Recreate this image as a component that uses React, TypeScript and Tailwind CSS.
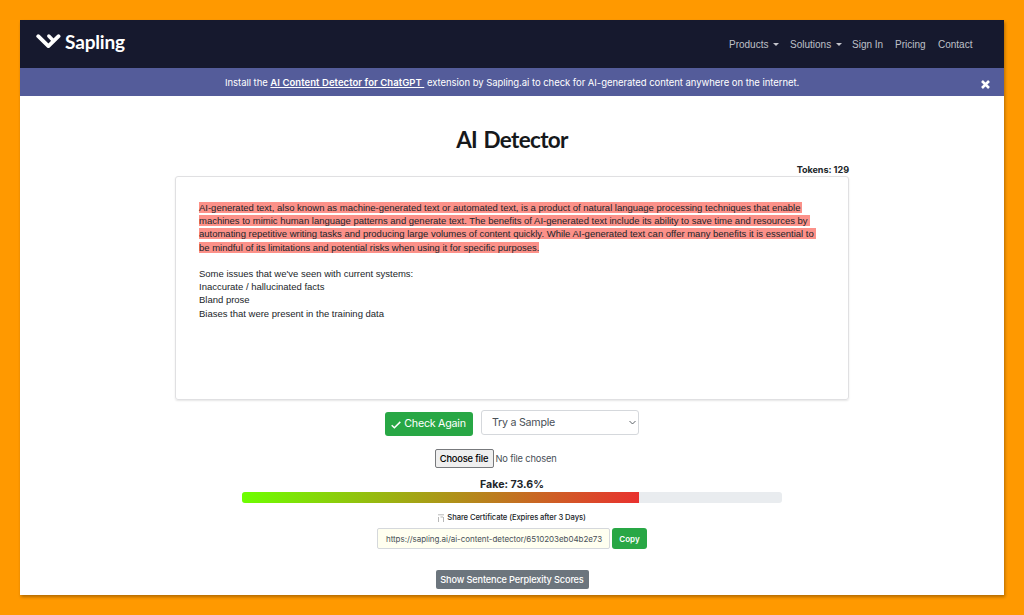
import React from "react";

const highlighted = [
  "AI-generated text, also known as machine-generated text or automated text, is a product of natural language processing techniques that enable",
  "machines to mimic human language patterns and generate text. The benefits of AI-generated text include its ability to save time and resources by",
  "automating repetitive writing tasks and producing large volumes of content quickly. While AI-generated text can offer many benefits it is essential to",
  "be mindful of its limitations and potential risks when using it for specific purposes.",
];

const plain = [
  "Some issues that we've seen with current systems:",
  "Inaccurate / hallucinated facts",
  "Bland prose",
  "Biases that were present in the training data",
];

function Caret() {
  return <span className="ml-[5px] inline-block border-x-[3px] border-t-[3px] border-x-transparent border-t-[#c3c4cb]" />;
}

function Logo() {
  return (
    <div className="flex items-start text-white">
      <svg className="mt-[13px] h-[17px] w-[26px]" viewBox="0 0 26 17" fill="none" stroke="currentColor" strokeWidth="3.8" strokeLinecap="round" strokeLinejoin="round">
        <path d="M2.2 3.2 L12.4 13.1 L22.6 3.2" />
        <path d="M12.8 3 L17.4 7.7" strokeWidth="3.4" />
      </svg>
      <span className="mt-[9px] ml-[3px] font-['Lato',sans-serif] text-[19px] leading-[26px] font-bold tracking-[-0.15px] whitespace-nowrap">Sapling</span>
    </div>
  );
}

function NavBar() {
  return (
    <header className="flex h-12 shrink-0 items-start justify-between bg-[#16192e] pr-8 pl-4">
      <Logo />
      <nav className="flex h-12 items-center font-['Liberation_Sans',Arial,sans-serif] text-[10px] whitespace-nowrap text-[#bfc0c8]">
        <a className="flex w-[61px] items-center">Products<Caret /></a>
        <a className="flex w-[62px] items-center">Solutions<Caret /></a>
        <a className="w-[43px]">Sign In</a>
        <a className="w-[43px]">Pricing</a>
        <a className="w-[34px]">Contact</a>
      </nav>
    </header>
  );
}

function Banner() {
  return (
    <div className="flex h-7 shrink-0 items-center bg-[#545c9a] pr-[14px] pl-[205px] font-['Inter',sans-serif] text-[9.5px] text-white">
      <p className="grow pt-[2px] tracking-[-0.045px] whitespace-pre">
        Install the <a className="font-semibold tracking-[0.06px] underline">AI Content Detector for ChatGPT </a> extension by Sapling.ai to check for AI-generated content anywhere on the internet.
      </p>
      <svg className="mt-[4px] h-[9px] w-[9px]" viewBox="0 0 9 9" stroke="white" strokeWidth="2.6">
        <path d="M1 1 L8 8 M8 1 L1 8" />
      </svg>
    </div>
  );
}

function Editor() {
  return (
    <div className="h-[224px] w-[674px] shrink-0 rounded-[3px] border border-[#e0e0e2] pt-[24px] pl-[23px] font-['Liberation_Sans',Arial,sans-serif] text-[9.5px] leading-[13.2px] tracking-[-0.008px] whitespace-nowrap text-[#212529] shadow-[0_1px_2px_rgba(0,0,0,0.1)]">
      {highlighted.map((l, i) => (
        <div key={i} className="flex h-[13.2px] items-center">
          <span className={i === 3 ? "h-[11px] bg-[#fc9189] leading-[11px]" : "h-[11px] bg-[#fc9189] pr-[2px] leading-[11px]"}>{l}</span>
        </div>
      ))}
      <div className="h-[13.2px]" />
      {plain.map((l) => (
        <div key={l}>{l}</div>
      ))}
    </div>
  );
}

export default function App() {
  return (
    <div className="h-[615px] w-[1024px] overflow-hidden bg-[#ff9900] p-5">
      <div className="flex h-[575px] w-[984px] flex-col bg-white shadow-[1px_2px_3px_rgba(0,0,0,0.3)]">
        <NavBar />
        <Banner />
        <main className="flex grow flex-col items-center font-['Inter',sans-serif] text-[#212529]">
          <h1 className="mt-[28px] h-8 font-['Lato',sans-serif] text-[22.5px] leading-8 font-bold tracking-[-0.65px] text-[#16181b] [word-spacing:1.5px]">AI Detector</h1>
          <div className="mt-[7px] flex h-[13px] w-[674px] items-center justify-end text-[9.1px] font-bold tracking-[-0.05px]">Tokens: 129</div>
          <Editor />
          <div className="mt-[10px] flex h-[27px] items-start text-[#495057]">
            <button className="mt-[2px] flex h-6 w-[88px] items-center justify-center gap-[3px] rounded-[3px] bg-[#28a745] pt-px pr-px text-[10.7px] tracking-[-0.25px] text-white">
              <svg className="h-[8px] w-[10px]" viewBox="0 0 10 8" fill="none" stroke="currentColor" strokeWidth="1.5">
                <path d="M0.7 4.2 L3.4 6.8 L9.3 0.9" />
              </svg>
              Check Again
            </button>
            <div className="ml-2 flex h-[25px] w-[158px] items-center justify-between rounded-[3px] border border-[#d5d8dc] pr-[2px] pl-[10px] text-[10.7px] tracking-[-0.25px]">
              <span className="pt-px">Try a Sample</span>
              <svg className="h-[5px] w-[7px]" viewBox="0 0 7 5" fill="none" stroke="#495057" strokeWidth="0.9">
                <path d="M0.5 1 L3.5 4 L6.5 1" />
              </svg>
            </div>
          </div>
          <div className="mt-3 flex h-[19px] w-[155px] text-[9.3px] tracking-[-0.17px] whitespace-nowrap">
            <div className="flex-none pr-[2px]">
              <button className="flex h-[19px] w-[59px] items-center justify-center rounded-[2px] border border-[#77797c] bg-[#efefef] font-medium text-black">Choose file</button>
            </div>
            <span className="leading-[19px] text-[#495057]">No file chosen</span>
          </div>
          <div className="mt-[9px] h-[15px] text-[10.6px] leading-[15px] font-bold">Fake: 73.6%</div>
          <div className="h-[11px] w-[540px] overflow-hidden rounded-[3px] bg-[#e9ecef]">
            <div className="h-full w-[397px] bg-[linear-gradient(100deg,#6dff00,#e9312f)]" />
          </div>
          <div className="mt-[8px] flex h-[13px] items-center gap-[3px] text-[7.7px] font-medium tracking-[-0.12px]">
            <svg className="h-[8px] w-[6px]" viewBox="0 0 6 8" fill="none" stroke="#b0b0b0" strokeWidth="0.9">
              <path d="M0 0.8 H6 M2.5 3 H5 M0.5 3 V8 M5.5 3 V8" />
            </svg>
            Share Certificate (Expires after 3 Days)
          </div>
          <div className="mt-[4px] flex h-[21px] gap-[2px]">
            <div className="flex h-[21px] w-[233px] items-center rounded-[2px] border border-[#d5d8dc] bg-[#fffff0] pl-[8px] text-[8px] tracking-[-0.05px] whitespace-nowrap text-[#495057]">
              https://sapling.ai/ai-content-detector/6510203eb04b2e73
            </div>
            <button className="h-[21px] w-[35px] rounded-[3px] bg-[#28a745] text-[8px] font-semibold text-white">Copy</button>
          </div>
          <button className="mt-[21px] h-[19px] w-[153px] rounded-[2px] bg-[#6c757d] text-[9.2px] font-medium tracking-[-0.15px] whitespace-nowrap text-white">Show Sentence Perplexity Scores</button>
        </main>
      </div>
    </div>
  );
}
